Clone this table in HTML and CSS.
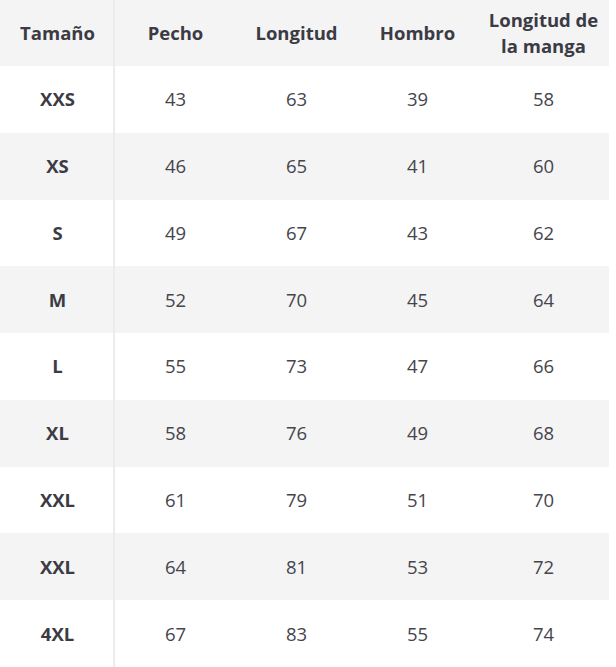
FILE: index.html
```html
<!DOCTYPE html>
<html lang="es">
<head>
<meta charset="utf-8">
<link rel="stylesheet" href="styles.css">
</head>
<body>
<div class="size-table">
  <div class="row head">
    <div class="cell first">Tamaño</div>
    <div class="cell">Pecho</div>
    <div class="cell">Longitud</div>
    <div class="cell">Hombro</div>
    <div class="cell">Longitud de<br>la manga</div>
  </div>
  <div class="row"><div class="cell first">XXS</div><div class="cell">43</div><div class="cell">63</div><div class="cell">39</div><div class="cell">58</div></div>
  <div class="row alt"><div class="cell first">XS</div><div class="cell">46</div><div class="cell">65</div><div class="cell">41</div><div class="cell">60</div></div>
  <div class="row"><div class="cell first">S</div><div class="cell">49</div><div class="cell">67</div><div class="cell">43</div><div class="cell">62</div></div>
  <div class="row alt"><div class="cell first">M</div><div class="cell">52</div><div class="cell">70</div><div class="cell">45</div><div class="cell">64</div></div>
  <div class="row"><div class="cell first">L</div><div class="cell">55</div><div class="cell">73</div><div class="cell">47</div><div class="cell">66</div></div>
  <div class="row alt"><div class="cell first">XL</div><div class="cell">58</div><div class="cell">76</div><div class="cell">49</div><div class="cell">68</div></div>
  <div class="row"><div class="cell first">XXL</div><div class="cell">61</div><div class="cell">79</div><div class="cell">51</div><div class="cell">70</div></div>
  <div class="row alt"><div class="cell first">XXL</div><div class="cell">64</div><div class="cell">81</div><div class="cell">53</div><div class="cell">72</div></div>
  <div class="row"><div class="cell first">4XL</div><div class="cell">67</div><div class="cell">83</div><div class="cell">55</div><div class="cell">74</div></div>
</div>
</body>
</html>
```
FILE: styles.css
```css
html, body {
  margin: 0;
  padding: 0;
  background: #ffffff;
}
body {
  font-family: "Open Sans", Lato, sans-serif;
  color: #3b3b44;
}
.size-table {
  width: 609px;
  height: 667px;
  display: grid;
  grid-template-rows: 66px repeat(9, 1fr);
}
.row {
  display: grid;
  grid-template-columns: 115px 121px 121px 121px 131px;
  background: #ffffff;
}
.row.head,
.row.alt {
  background: #f4f4f4;
}
.cell {
  display: flex;
  align-items: center;
  justify-content: center;
  text-align: center;
  font-size: 18.5px;
  line-height: 26px;
  font-weight: 400;
  color: #45454c;
}
.cell.first {
  font-weight: 700;
  color: #3b3b44;
  border-right: 2px solid #ececec;
  padding-left: 2px;
}
.head .cell {
  font-weight: 700;
  color: #3b3b44;
}
```
